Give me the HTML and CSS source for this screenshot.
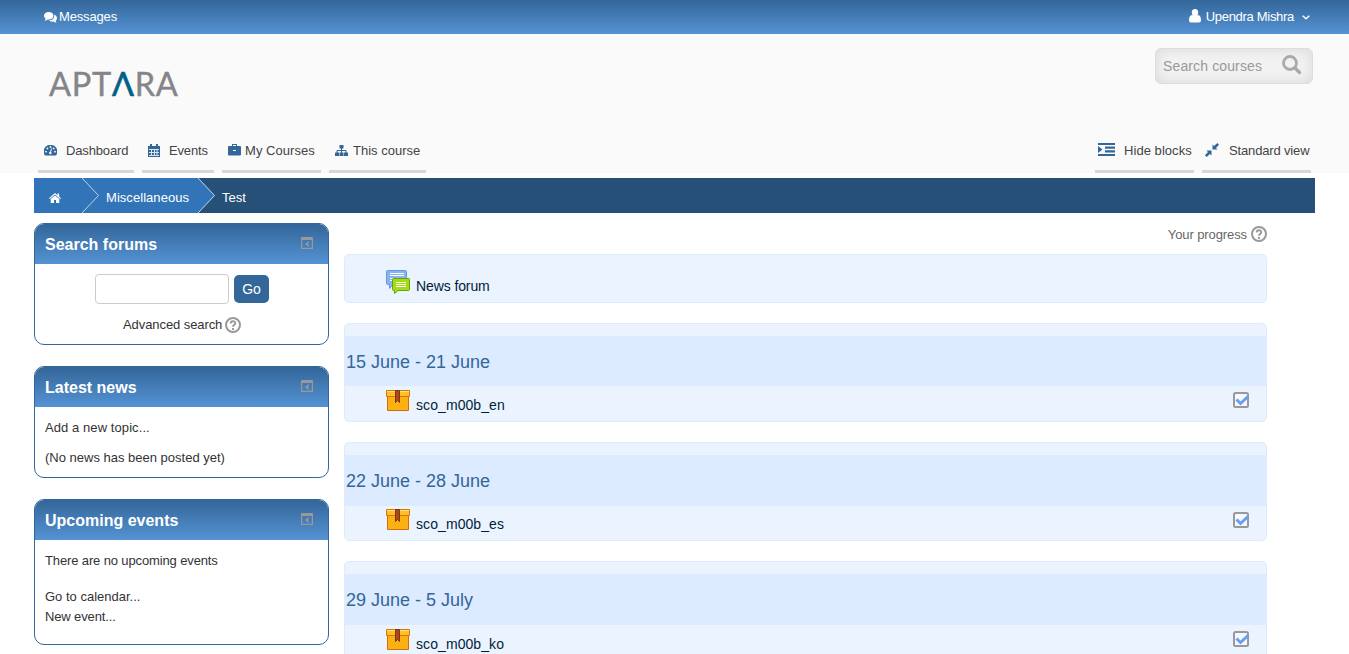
FILE: index.html
```html
<!DOCTYPE html>
<html lang="en">
<head>
<meta charset="utf-8">
<title>Course: Test</title>
<link rel="stylesheet" href="styles.css">
</head>
<body>
<svg class="sprite" width="0" height="0">
  <symbol id="collapse" viewBox="0 0 12 12"><path fill="none" stroke="#999" stroke-width="1.300" d="M.6 2.500V11.400H11.400V2.500"/><path fill="#999" d="M0 1q0-1 1-1h10q1 0 1 1v2H0zM4 7l3-2.500h1.300L7 7l1.300 2.500H7z"/></symbol>
  <symbol id="help" viewBox="0 0 16 16"><circle cx="8" cy="8" r="7" fill="none" stroke="#999" stroke-width="2"/><path d="M5.700 6.500C5.700 3.500 10.300 3.500 10.300 6.300 10.300 8 8 7.800 8 9.700" fill="none" stroke="#999" stroke-width="1.900"/><path fill="#999" d="M7 11h2v2H7z"/></symbol>
  <symbol id="box" viewBox="0 0 24 21"><path fill="#fbb112" stroke="#d46c0c" d="M1.500 6.500h21v14h-21z"/><path fill="#ffc125" stroke="#d8740d" d="M.5.500h23v6H.5z"/><path stroke="#ffe17a" d="M1 1.500h22"/><path fill="#a94b16" stroke="#813511" d="M9.500.500h4v12l-2-2-2 2z"/></symbol>
  <symbol id="check" viewBox="0 0 16 16"><rect x="1" y="1" width="14" height="14" rx="1.500" fill="#f3f7ff" stroke="#999" stroke-width="2"/><path d="M3.500 7.500l4 4 8-7.500" fill="none" stroke="#6d9eee" stroke-width="3"/></symbol>
</svg>
<header class="topbar">
  <a class="messages"><svg width="13" height="11" viewBox="0 0 13 11"><path fill="#fff" d="M4.800 0C7.500 0 9.500 1.700 9.500 3.800S7.500 7.600 4.800 7.600L3.600 7.500Q2.300 8.700.8 8.800L1.700 6.800Q0 5.800 0 3.800C0 1.700 2.100 0 4.800 0z"/><path fill="#fff" d="M10.400 2.500Q13 3.700 13 6 13 7.600 11.700 8.600L12.500 10.700Q10.700 10.600 9.600 9.500 6.500 10 4.900 8.500 10 8.200 10.400 4z"/></svg><span>Messages</span></a>
  <a class="user"><svg width="12" height="14" viewBox="0 0 12 14"><path fill="#fff" d="M6 0a3.200 3.600 0 1 1 0 7.200A3.200 3.600 0 1 1 6 0zM3 6Q6 8.500 9 6 12 6.500 12 11.300 12 13.500 10 13.500H2Q0 13.500 0 11.300 0 6.500 3 6z"/></svg><span>Upendra Mishra</span><svg class="caret" width="8" height="5" viewBox="0 0 8 5"><path d="M.7.700L4 3.800 7.300.700" fill="none" stroke="#fff" stroke-width="1.400"/></svg></a>
</header>
<section class="header">
  <div class="brand">
    <div class="logo"><span>APT</span><span class="accent">Λ</span><span>RA</span></div>
    <div class="search"><span>Search courses</span><svg width="20" height="20" viewBox="0 0 20 20"><circle cx="8" cy="8" r="6.500" fill="none" stroke="#aaa" stroke-width="2.800"/><path d="M13 13l4.500 4.500" stroke="#aaa" stroke-width="3.400" stroke-linecap="round"/></svg></div>
  </div>
  <nav class="nav">
    <a class="dash"><svg width="13" height="11" viewBox="0 0 13 11"><path fill="#336699" d="M6.500 0A6.500 6.500 0 0 1 12 10.500H1A6.500 6.500 0 0 1 6.500 0z"/><g fill="#fafafa"><circle cx="2" cy="6.700" r=".9"/><circle cx="3.400" cy="3.400" r=".9"/><circle cx="6.500" cy="2" r=".9"/><circle cx="9.700" cy="3.400" r=".9"/><circle cx="11" cy="6.700" r=".9"/><circle cx="6.300" cy="8" r="1.300"/></g><path d="M6.300 8l1.300-4.500" stroke="#fafafa"/></svg><span>Dashboard</span></a>
    <a class="events"><svg width="12" height="13" viewBox="0 0 12 13"><path fill="#336699" d="M0 2h2V0h2v2h4V0h2v2h2v11H0z"/><path stroke="#fafafa" stroke-width="1" d="M1 5.500h10M1 8.500h10M1 11.500h10M3.500 5v7M6.500 5v7M9 5v7" opacity=".85"/></svg><span>Events</span></a>
    <a class="mine"><svg width="13" height="12" viewBox="0 0 13 12"><path fill="#336699" fill-rule="evenodd" d="M1 2h3V0h5v2h3q1 0 1 1v7.500q0 1-1 1H1q-1 0-1-1V3q0-1 1-1zM5 1v1h3V1z"/><path stroke="#fafafa" d="M5 6.500h3"/></svg><span>My Courses</span></a>
    <a class="this"><svg width="13" height="11" viewBox="0 0 13 11"><path fill="#336699" d="M4.500 0h4v3.500h-4zM0 7.500h4V11H0zM4.500 7.500h4V11h-4zM9 7.500h4V11H9z"/><path d="M6.500 3v5M2 8V5.500h9V8" fill="none" stroke="#336699"/></svg><span>This course</span></a>
    <a class="hide"><svg width="17" height="13" viewBox="0 0 17 13"><path fill="#336699" d="M0 0h17v2H0zM7 3.500h10v2.200H7zM7 7.200h10v2.200H7zM0 11h17v2H0zM0 3l4.500 3.500L0 10z"/></svg><span>Hide blocks</span></a>
    <a class="view"><svg width="14" height="14" viewBox="0 0 14 14"><path fill="#336699" d="M7.500 6.500V1.500l1.600 1.400L12.300 0 14 1.700 11 4.900 12.500 6.500zM6.500 7.500V12.500l-1.600-1.400L1.700 14 0 12.300 3 9.100 1.500 7.500z"/></svg><span>Standard view</span></a>
  </nav>
</section>
<nav class="crumbs">
  <a class="home"><svg width="12" height="10" viewBox="0 0 12 10"><path fill="#fff" d="M6 0l2.500 2.200V.6h1.600v3L12 5.300l-.7.700L6 1.500.7 6 0 5.300zM6 2.500l4.300 3.600V10H7V7H5v3H1.700V6.100z"/></svg></a>
  <svg class="arrow" width="17" height="35" viewBox="0 0 17 35"><path class="before" d="M0 0l17 17.500L0 35z"/><path class="line" d="M0 0l16.500 17.500L0 35"/></svg>
  <a class="misc">Miscellaneous</a>
  <svg class="arrow last" width="17" height="35" viewBox="0 0 17 35"><path class="before" d="M0 0l17 17.500L0 35z"/><path class="line" d="M0 0l16.500 17.500L0 35"/></svg>
  <span class="current">Test</span>
</nav>
<div class="page">
  <aside>
    <section class="block find">
      <h2><span>Search forums</span><svg width="12" height="12"><use href="#collapse"/></svg></h2>
      <div class="form"><input type="text" aria-label="Search"><button>Go</button></div>
      <p class="advanced"><span>Advanced search</span><svg width="16" height="16"><use href="#help"/></svg></p>
    </section>
    <section class="block news">
      <h2><span>Latest news</span><svg width="12" height="12"><use href="#collapse"/></svg></h2>
      <div class="body"><p class="loose">Add a new topic...</p><p class="gap10">(No news has been posted yet)</p></div>
    </section>
    <section class="block upcoming">
      <h2><span>Upcoming events</span><svg width="12" height="12"><use href="#collapse"/></svg></h2>
      <div class="body"><p class="tight">There are no upcoming events</p><p class="gap16">Go to calendar...</p><p class="tight">New event...</p></div>
    </section>
  </aside>
  <main>
    <div class="progress"><span>Your progress</span><svg width="16" height="16"><use href="#help"/></svg></div>
    <section class="topic general"><div class="activity"><svg width="25" height="24" viewBox="0 0 25 24"><path fill="#86b4f2" stroke="#6798df" d="M1.500.5h18q1 0 1 1v13H7l-3.500 4v-4h-2q-1 0-1-1v-12q0-1 1-1z"/><path stroke="#fff" d="M4 3.500h14M4 5.500h14M4 8.500h3M4 10.500h3"/><path fill="#a4dc12" stroke="#64a510" d="M7.500 8.500h15q1 0 1 1v10q0 1-1 1H12l-3.500 3v-3h-1q-1 0-1-1v-10q0-1 1-1z"/><path stroke="#fff" d="M10 12.500h10M10 14.500h10M10 16.500h10"/></svg><span>News forum</span></div></section>
    <section class="topic"><h3>15 June - 21 June</h3><div class="activity"><svg width="24" height="21"><use href="#box"/></svg><span>sco_m00b_en</span><svg class="done" width="16" height="16"><use href="#check"/></svg></div></section>
    <section class="topic second"><h3>22 June - 28 June</h3><div class="activity"><svg width="24" height="21"><use href="#box"/></svg><span>sco_m00b_es</span><svg class="done" width="16" height="16"><use href="#check"/></svg></div></section>
    <section class="topic third"><h3>29 June - 5 July</h3><div class="activity"><svg width="24" height="21"><use href="#box"/></svg><span>sco_m00b_ko</span><svg class="done" width="16" height="16"><use href="#check"/></svg></div></section>
  </main>
</div>
</body>
</html>
```
FILE: styles.css
```css
* { box-sizing: border-box; }
html, body { height: 654px; overflow: hidden; }
body { margin: 0; background: #fff; color: #333; font: 13px/20px "Liberation Sans", Arial, sans-serif; }
h2, h3, p { margin: 0; }
svg { display: block; flex: none; }
.sprite { position: absolute; }
.topbar { height: 34px; padding: 0 39px 0 44px; display: flex; justify-content: space-between; align-items: center; color: #fff; background: linear-gradient(#336699, #5593d4); }
.topbar a { display: flex; align-items: center; }
.messages { gap: 2px; letter-spacing: -.15px; }
.user { gap: 5px; letter-spacing: -.3px; }
.user svg:first-child { margin-top: -2px; }
.user .caret { margin-left: 3px; }
.header { height: 139px; background: #fafafa; }
.brand { height: 94px; display: flex; justify-content: space-between; padding: 14px 36px 0 49px; }
.logo { margin-top: 16px; height: 40px; display: flex; font: 32.5px/40px Lato, sans-serif; letter-spacing: .75px; color: #858589; -webkit-text-stroke: .4px currentColor; }
.logo .accent { color: #006088; -webkit-text-stroke: .6px currentColor; }
.search { width: 158px; height: 36px; padding: 0 10px 0 7px; display: flex; align-items: center; justify-content: space-between; font-size: 14px; letter-spacing: .13px; color: #999; border: 1px solid #ddd; border-radius: 6px; background: #f2f2f2; box-shadow: inset 0 0 13px #d8d8d8; }
.search svg { margin-top: -2px; }
.nav { height: 45px; display: flex; gap: 8px; padding-left: 38px; }
.nav a { height: 45px; padding: 3px 0 0 6px; display: flex; align-items: center; border-bottom: 3px solid #d8d8d2; color: #444; white-space: nowrap; }
.nav .dash { width: 96px; gap: 9px; letter-spacing: -.15px; }
.nav .events { width: 72px; gap: 9px; letter-spacing: -.15px; }
.nav .mine { width: 99px; gap: 4px; letter-spacing: .05px; }
.nav .this { width: 97px; gap: 5px; }
.nav .hide { width: 99px; gap: 9px; margin-left: 661px; padding-left: 3px; letter-spacing: .05px; }
.nav .view { width: 109px; gap: 10px; padding-left: 3px; letter-spacing: -.15px; }
.hide svg { margin-top: -2px; }
.view svg { margin-top: -2px; }
.mine svg { margin-top: -2px; }
.crumbs { width: 1281px; height: 35px; margin: 5px 0 0 34px; display: flex; align-items: center; background: #265077; color: #fff; }
.crumbs a { height: 35px; background: #3175b8; }
.home { width: 48px; padding: 15px 0 0 15px; }
.misc { width: 99px; padding: 10px 0 0 7px; letter-spacing: .05px; }
.arrow { background: #3175b8; }
.arrow.last { background: #265077; }
.before { fill: #3175b8; }
.line { fill: none; stroke: #bfd5e9; }
.current { padding: 5px 0 0 7px; }
.page { display: flex; gap: 15px; padding-left: 34px; }
aside { width: 295px; padding-top: 10px; display: flex; flex-direction: column; gap: 21px; }
.block { border: 1px solid #336699; border-radius: 10px; overflow: hidden; }
.find { height: 122px; }
.news { height: 112px; }
.upcoming { height: 146px; }
.block h2 { height: 40px; padding: 1px 15px 0 10px; display: flex; justify-content: space-between; align-items: center; font-size: 16px; color: #fff; background: linear-gradient(#336699, #5593d4); }
.block h2 svg { margin-top: -4px; }
.form { display: flex; gap: 5px; padding: 10px 0 0 60px; }
.form input { width: 134px; height: 30px; border: 1px solid #ccc; border-radius: 4px; background: #fff; }
.form button { width: 35px; height: 28px; margin-top: 1px; padding: 0; border: 0; border-radius: 5px; background: #336699; color: #fff; font: 14px "Liberation Sans", sans-serif; }
.advanced { display: flex; align-items: center; gap: 3px; padding: 11px 0 0 88px; letter-spacing: -.08px; }
.body { padding: 11px 10px; }
.loose { letter-spacing: .08px; }
.tight { letter-spacing: -.13px; }
.gap10 { margin-top: 10px; }
.gap16 { margin-top: 16px; }
main { width: 923px; }
.progress { height: 41px; padding-top: 2px; display: flex; justify-content: flex-end; align-items: center; gap: 4px; color: #666; letter-spacing: -.1px; }
.progress svg { margin-top: -2px; }
.topic { height: 99px; margin-bottom: 20px; padding-top: 12px; border: 1px solid #dcebff; border-radius: 5px; background: #ebf3ff; }
.general { height: 49px; }
.topic h3 { height: 50px; padding: 1px 0 0 1px; font-size: 18px; line-height: 50px; font-weight: 400; color: #336699; background: #dcebff; }
.activity { display: flex; gap: 6px; padding: 4px 17px 0 41px; font-size: 14px; letter-spacing: .08px; color: #001e3c; }
.activity span { margin-top: 5px; }
.general .activity { padding-top: 3px; gap: 5px; letter-spacing: -.1px; }
.general .activity span { margin-top: 6px; }
.done { margin: 2px 0 0 auto; }
.second h3, .third h3 { height: 51px; }
.second .activity { padding-top: 3px; }
.second .done { margin-top: 3px; }
```
